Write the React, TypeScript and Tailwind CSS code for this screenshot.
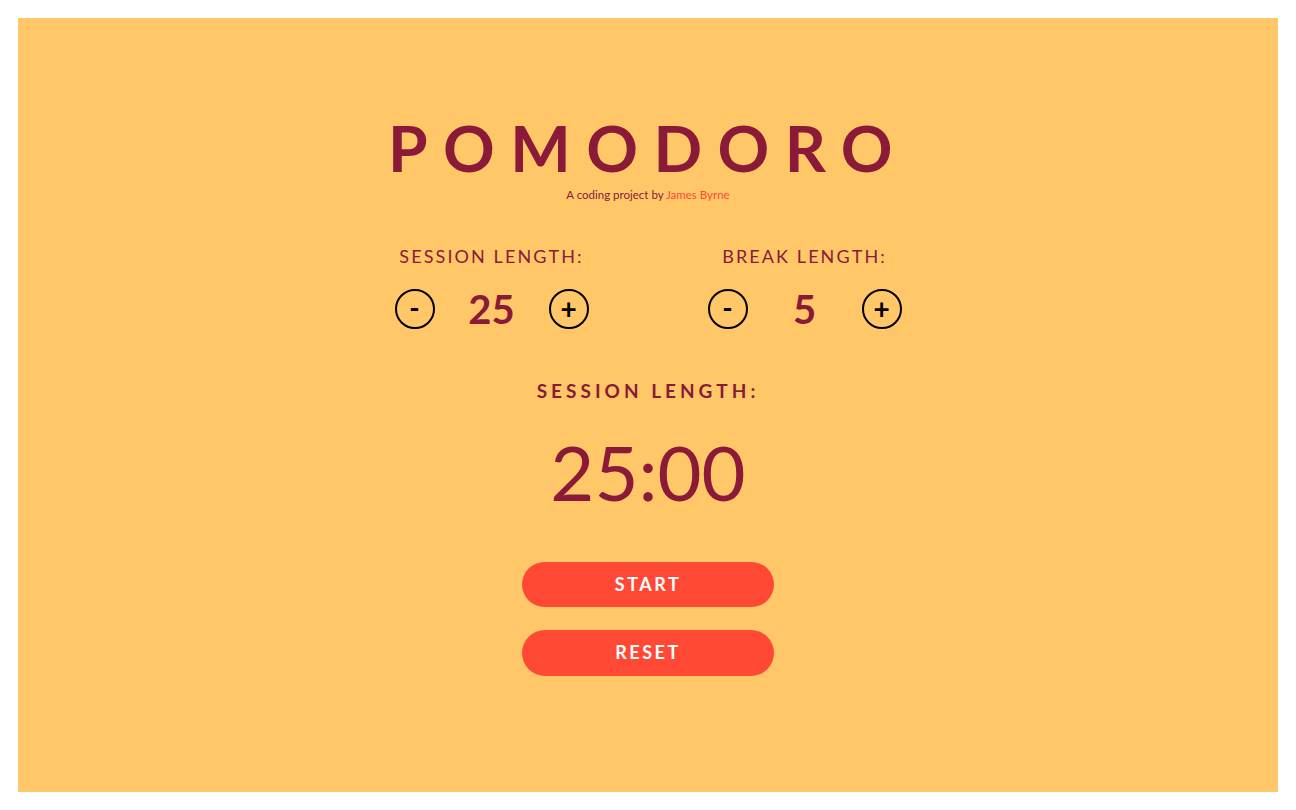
import { useState } from "react";

function Counter({ label, value, onDec, onInc }: { label: string; value: number; onDec: () => void; onInc: () => void }) {
  return (
    <div className="flex w-[220px] flex-col items-center">
      <h2 className="text-[18px] leading-none tracking-[2.1px] text-[#8a1a37]">{label}</h2>
      <div className="mt-[24px] flex items-center">
        <button
          onClick={onDec}
          className="flex h-[40px] w-[40px] items-center justify-center rounded-full border-2 border-black pb-[3px] text-[28px] font-bold leading-none text-black"
        >
          -
        </button>
        <span className="w-[114px] text-center text-[40px] font-bold leading-none text-[#8a1a37]">{value}</span>
        <button
          onClick={onInc}
          className="flex h-[40px] w-[40px] items-center justify-center rounded-full border-2 border-black pb-[2px] text-[28px] font-bold leading-none text-black"
        >
          +
        </button>
      </div>
    </div>
  );
}

export default function App() {
  const [session, setSession] = useState(25);
  const [brk, setBrk] = useState(5);

  return (
    <div className="min-h-screen bg-white p-[18px] font-['Lato',sans-serif]">
      <div className="flex h-[774px] flex-col items-center bg-[#ffc767]">
        <h1 className="mt-[98px] text-[64px] font-bold leading-none tracking-[15.5px] text-[#8a1a37]">POMODORO</h1>
        <p className="mt-[9px] text-[11.5px] leading-none text-[#8a1a37]">
          A coding project by <a className="text-[#ff4935]">James Byrne</a>
        </p>

        <div className="mt-[46px] flex gap-[93px]">
          <Counter
            label="SESSION LENGTH:"
            value={session}
            onDec={() => setSession((s) => Math.max(1, s - 1))}
            onInc={() => setSession((s) => s + 1)}
          />
          <Counter
            label="BREAK LENGTH:"
            value={brk}
            onDec={() => setBrk((s) => Math.max(1, s - 1))}
            onInc={() => setBrk((s) => s + 1)}
          />
        </div>

        <h2 className="mt-[52px] text-[19px] font-bold leading-none tracking-[4px] text-[#8a1a37]">SESSION LENGTH:</h2>
        <div className="mt-[34px] text-[76px] leading-none text-[#8a1a37]">{session}:00</div>

        <button className="mt-[52px] h-[45px] w-[252px] rounded-full bg-[#ff4935] text-[18px] font-bold tracking-[2.5px] text-white">
          START
        </button>
        <button className="mt-[23px] h-[46px] w-[252px] rounded-full bg-[#ff4935] text-[18px] font-bold tracking-[2.5px] text-white">
          RESET
        </button>
      </div>
    </div>
  );
}
